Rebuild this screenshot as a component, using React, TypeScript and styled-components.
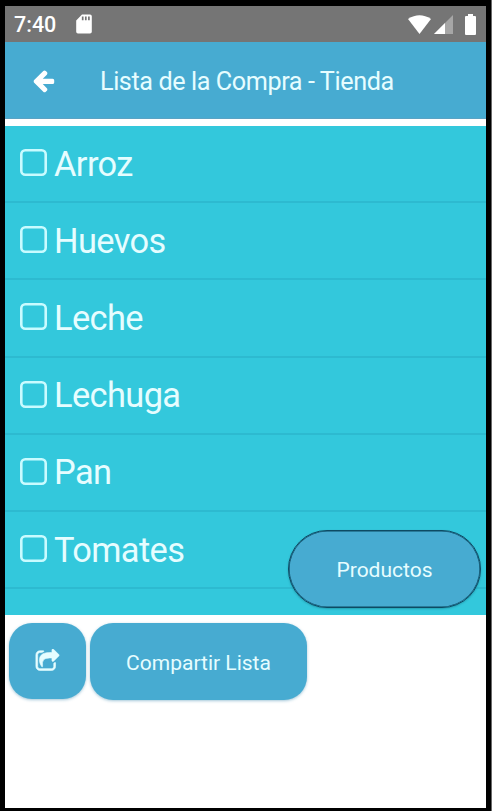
import React from 'react';
import styled, { createGlobalStyle } from 'styled-components';

const Global = createGlobalStyle`
  * { box-sizing: border-box; }
  body { margin: 0; background: #000; font-family: Roboto, sans-serif; overflow: hidden; }
  button { border: 0; padding: 0; margin: 0; font: inherit; color: inherit; }
`;

const Device = styled.div`
  width: 492px;
  height: 811px;
  padding: 6px 5px 3px 5px;
  background: #000;
  border-right: 1px solid #6b6b6b;
`;

const Screen = styled.main`
  width: 481px;
  height: 802px;
  background: #fff;
  display: flex;
  flex-direction: column;
`;

const StatusBar = styled.div`
  height: 36px;
  flex: none;
  display: flex;
  align-items: center;
  background: #757575;
  color: #fff;
  padding: 0 10px 0 9px;
`;

const Clock = styled.span`
  font-size: 21.5px;
  font-weight: 500;
  line-height: 36px;
  width: 62px;
  padding-top: 1px;
`;

const StatusIcons = styled.div`
  margin-left: auto;
  display: flex;
  align-items: center;
`;

const Glyph = styled.svg<{ $gap?: number }>`
  display: block;
  flex: none;
  margin-left: ${(p) => p.$gap ?? 0}px;
`;

const Header = styled.header`
  height: 77px;
  flex: none;
  display: flex;
  align-items: center;
  background: #47abd1;
  border-bottom: 1px solid #5aa3c4;
`;

const BackButton = styled.button`
  width: 95px;
  height: 76px;
  padding-left: 26px;
  background: none;
`;

const Title = styled.h1`
  margin: 0;
  padding-top: 2px;
  font-size: 25.2px;
  font-weight: 400;
  letter-spacing: -0.41px;
  white-space: nowrap;
  color: #e6fdff;
`;

const List = styled.ul`
  position: relative;
  list-style: none;
  margin: 7px 0 0;
  padding: 0;
  height: 489px;
  flex: none;
  background: #33c8dc;
`;

const Item = styled.li`
  height: 77.2px;
  display: flex;
  align-items: center;
  padding-left: 15px;
  border-bottom: 2px solid #2dbad0;
`;

const Check = styled.svg`
  display: block;
  flex: none;
  width: 27px;
  height: 27px;
  margin-top: -2px;
  fill: none;
  stroke: #c9fbff;
  stroke-width: 2.6;
`;

const ItemLabel = styled.span`
  margin-left: 7px;
  font-size: 34.4px;
  line-height: 40px;
  letter-spacing: -0.6px;
  color: #e6fdff;
`;

const ProductsButton = styled.button`
  position: absolute;
  right: 5px;
  bottom: 7px;
  width: 193px;
  height: 78px;
  border: 1px solid #0d4a63;
  border-radius: 39px;
  background: #47abd1;
  color: #e6fdff;
  font-size: 21px;
  padding-top: 2px;
  box-shadow: inset 0 0 0 0.6px #0d4a63, 0 1px 2px rgba(0, 60, 80, 0.3);
`;

const Actions = styled.div`
  display: flex;
  align-items: flex-start;
  gap: 4px;
  padding: 8px 4px;
`;

const ActionButton = styled.button<{ $width: number; $height: number }>`
  width: ${(p) => p.$width}px;
  height: ${(p) => p.$height}px;
  display: flex;
  align-items: center;
  justify-content: center;
  border-radius: 23px;
  background: #47abd1;
  color: #e6fdff;
  font-size: 21px;
  box-shadow: 0 1px 3px rgba(50, 130, 170, 0.45);
`;

const ActionText = styled.span`
  padding-top: 2px;
`;

const products = ['Arroz', 'Huevos', 'Leche', 'Lechuga', 'Pan', 'Tomates'];

export default function App() {
  return (
    <Device>
      <Global />
      <Screen>
        <StatusBar>
          <Clock>7:40</Clock>
          <Glyph width="16" height="20" viewBox="0 0 16 20">
            <path d="M6 .5h8a1.8 1.8 0 0 1 1.8 1.8v15.4a1.8 1.8 0 0 1-1.8 1.8H2a1.8 1.8 0 0 1-1.8-1.8V6.5z" fill="#fff" />
            <path d="M6.7 2.5v3.8M9.8 2.5v3.8M12.9 2.5v3.8" stroke="#757575" strokeWidth="1.7" />
          </Glyph>
          <StatusIcons>
            <Glyph width="23" height="19" viewBox="0 0 23 19">
              <path d="M0 4Q11.500-3.500 23 4L11.500 19Z" fill="#fff" />
            </Glyph>
            <Glyph $gap={3} width="19" height="19" viewBox="0 0 19 19">
              <path d="M19 0v19H0z" fill="#a6a6a6" />
              <path d="M11 8v11H0z" fill="#fff" />
            </Glyph>
            <Glyph $gap={12} width="11" height="21" viewBox="0 0 11 21">
              <path d="M3 0h5v2h2a1 1 0 0 1 1 1v17a1 1 0 0 1-1 1H1a1 1 0 0 1-1-1V3a1 1 0 0 1 1-1h2z" fill="#fff" />
            </Glyph>
          </StatusIcons>
        </StatusBar>

        <Header>
          <BackButton aria-label="Volver">
            <Glyph width="25" height="25" viewBox="0 0 1792 1792" fill="#fff">
              <path d="M1664 896v128q0 53-32.500 90.500t-84.500 37.500h-704l293 294q38 36 38 90t-38 90l-75 76q-37 37-90 37-52 0-91-37l-651-652q-37-37-37-90 0-52 37-91l651-650q38-38 91-38 52 0 90 38l75 74q38 38 38 91t-38 91l-293 293h704q52 0 84.500 37.500t32.500 90.500z" />
            </Glyph>
          </BackButton>
          <Title>Lista de la Compra - Tienda</Title>
        </Header>

        <List>
          {products.map((name) => (
            <Item key={name}>
              <Check viewBox="0 0 27 27">
                <rect x="1.3" y="1.3" width="24.4" height="24.4" rx="4" />
              </Check>
              <ItemLabel>{name}</ItemLabel>
            </Item>
          ))}
          <ProductsButton>Productos</ProductsButton>
        </List>

        <Actions>
          <ActionButton $width={77} $height={76} aria-label="Compartir">
            <Glyph width="25" height="25" viewBox="0 0 1792 1792" fill="#e6fdff" stroke="#e6fdff" strokeWidth="45">
              <path d="M1472 989v259q0 119-84.500 203.500t-203.500 84.500h-832q-119 0-203.500-84.500t-84.500-203.500v-832q0-119 84.500-203.500t203.500-84.500h255q13 0 22.500 9.500t9.500 22.500q0 27-26 32-77 26-133 60-10 4-16 4h-112q-66 0-113 47t-47 113v832q0 66 47 113t113 47h832q66 0 113-47t47-113v-214q0-19 18-29 28-13 54-37 16-16 35-8 21 9 21 29zm237-496l-384 384q-18 19-45 19-12 0-25-5-39-17-39-59v-192h-160q-323 0-438 131-119 137-74 473 3 23-20 34-8 2-12 2-16 0-26-13-10-14-21-31t-39.500-68.500-49.500-99.500-38.500-114-17.500-122q0-49 3.500-91t14-90 28-88 47-81.500 68.500-74 94.500-61.500 124.500-48.500 159.500-30.500 196.500-11h160v-192q0-42 39-59 13-5 25-5 26 0 45 19l384 384q19 19 19 45t-19 45z" />
            </Glyph>
          </ActionButton>
          <ActionButton $width={217} $height={77}>
            <ActionText>Compartir Lista</ActionText>
          </ActionButton>
        </Actions>
      </Screen>
    </Device>
  );
}
